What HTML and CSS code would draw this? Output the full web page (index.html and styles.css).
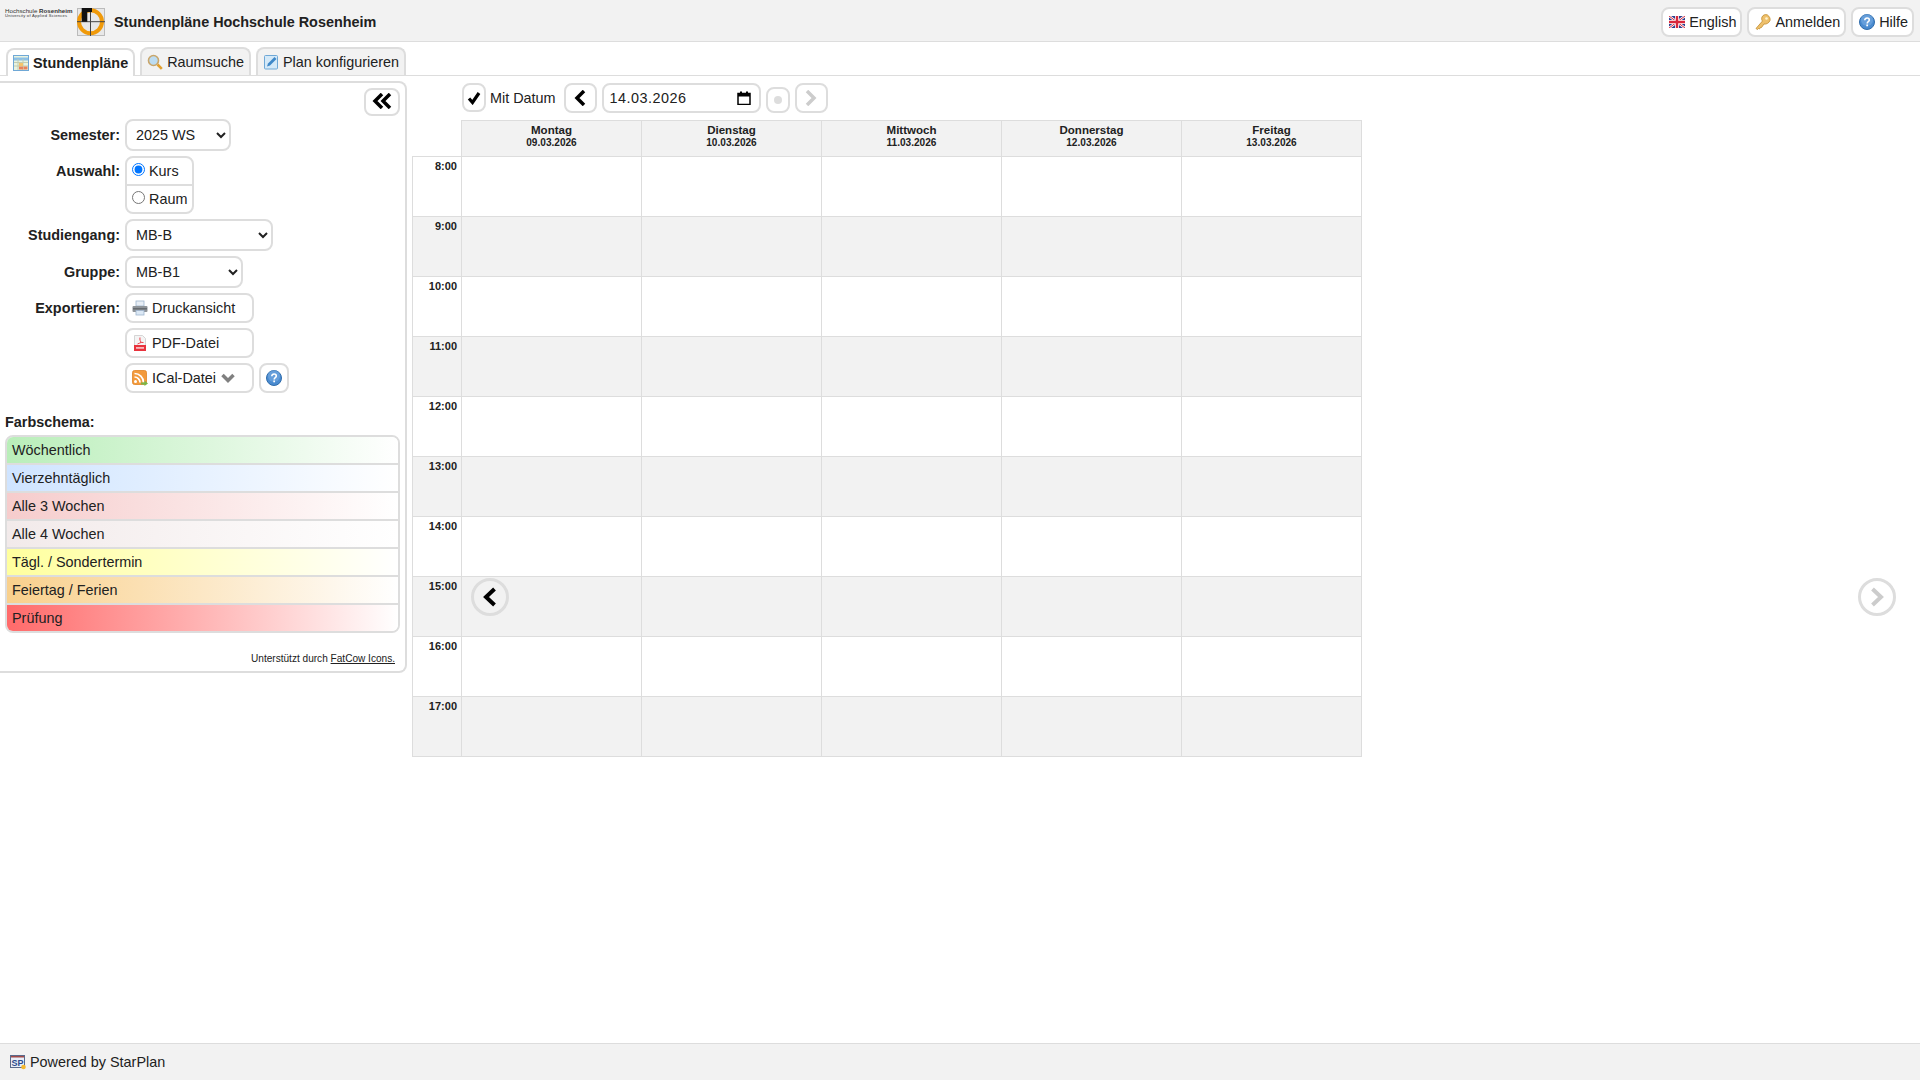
FILE: index.html
```html
<!DOCTYPE html>
<html lang="de">
<head>
  <meta charset="UTF-8">
  <meta name="viewport" content="width=device-width, initial-scale=1.0">
  <title>Stundenpläne Hochschule Rosenheim</title>
  <link rel="stylesheet" href="styles.css">
</head>
<body>
  <svg class="defs" width="0" height="0">
    <symbol id="help" viewBox="0 0 16 16">
      <circle cx="8" cy="8" r="7.5" fill="#4a8bd0" stroke="#2f6cab" stroke-width="1"/>
      <circle cx="8" cy="6" r="6" fill="#7fb2e5" opacity=".5"/>
      <path d="M5.8 6.2c0-1.4 1-2.2 2.3-2.2s2.2.8 2.2 2c0 1.700-2.100 1.700-2.100 3.400" fill="none" stroke="#fff" stroke-width="1.600"/>
      <rect x="7.300" y="10.500" width="1.700" height="1.800" fill="#fff"/>
    </symbol>
  </svg>

  <div class="header">
    <div class="logotext">
      <div class="logoline1">Hochschule <b>Rosenheim</b></div>
      <div class="logoline2">University of Applied Sciences</div>
    </div>
    <svg class="logo" width="28" height="28" viewBox="0 0 28 28">
      <rect x=".5" y=".5" width="27" height="27" fill="#e8e8e8" stroke="#bbb"/>
      <circle cx="13.500" cy="13.700" r="11.500" fill="none" stroke="#f09a0a" stroke-width="4"/>
      <path d="M13.500 0v28M0 13.700h28" stroke="#444" stroke-width="1"/>
      <path d="M4.700 0H15v4H10.300v9.700H4.700z" fill="#111"/>
    </svg>
    <div class="title">Stundenpläne Hochschule Rosenheim</div>
    <div class="headbtns">
      <a class="btn">
        <svg width="16" height="12" viewBox="0 0 16 12"><rect width="16" height="12" fill="#2b3f8f"/><path d="M0 0l16 12M16 0L0 12" stroke="#fff" stroke-width="2.500"/><path d="M0 0l16 12M16 0L0 12" stroke="#d8283c" stroke-width="1"/><path d="M8 0v12M0 6h16" stroke="#fff" stroke-width="4"/><path d="M8 0v12M0 6h16" stroke="#d8283c" stroke-width="2.400"/></svg>
        English
      </a>
      <a class="btn">
        <svg width="16" height="16" viewBox="0 0 16 16"><path d="M1 14.500l1.500 1 1-1 1 .500 1-1.500 1 0 2.500-3.500c2.500.500 5-1 6-3.500.500-2-.500-4-2.500-5.500-2.500-1-4.500 0-5.500 2-.500 1.500-.500 3 .500 4z" fill="#eec06b" stroke="#c08a2c" stroke-width=".8"/><circle cx="11.500" cy="4.500" r="1.300" fill="#fff3d0"/></svg>
        Anmelden
      </a>
      <a class="btn">
        <svg width="16" height="16"><use href="#help"/></svg>
        Hilfe
      </a>
    </div>
  </div>

  <div class="tabs">
    <a class="tab active">
      <svg width="16" height="16" viewBox="0 0 16 16"><rect x=".5" y=".5" width="15" height="15" fill="#e8f3e0" stroke="#6fa8d6"/><path d="M1 4h14" stroke="#8cc0e6" stroke-width="3"/><path d="M1 7.500h14M1 11h14M5 4v11M10 4v11" stroke="#c2ccb0" stroke-width="1"/><rect x="6" y="8" width="4" height="3" fill="#f4c46a"/><rect x="10.500" y="11.500" width="4" height="3" fill="#e8825a"/><rect x="6" y="11.500" width="4" height="3" fill="#e8825a"/></svg>
      Stundenpläne
    </a>
    <a class="tab">
      <svg width="16" height="16" viewBox="0 0 16 16"><circle cx="6.500" cy="6.500" r="5" fill="#bcdcf2" stroke="#c9a66b" stroke-width="1.600"/><path d="M10.500 10.500l4.300 4.300" stroke="#e0a030" stroke-width="2.600"/></svg>
      Raumsuche
    </a>
    <a class="tab">
      <svg width="16" height="16" viewBox="0 0 16 16"><rect x="1.500" y="1.500" width="13" height="13.500" rx="1" fill="#d4e9f8" stroke="#6fa8d6"/><path d="M4 12.500l1-3 6.500-6.500 2 2L7 11.500z" fill="#3f88c8"/></svg>
      Plan konfigurieren
    </a>
  </div>

  <div class="main">
    <div class="sidebar">
      <div class="collapse">
        <button class="iconbtn collapsebtn">
          <svg width="20" height="16" viewBox="0 0 20 16"><path d="M10 1L3 8l7 7M18 1l-7 7 7 7" fill="none" stroke="#000" stroke-width="3.500"/></svg>
        </button>
      </div>

      <div class="form">
        <div class="lbl">Semester:</div>
        <div><select class="sel sel-sem"><option>2025 WS</option></select></div>

        <div class="lbl lbl-auswahl">Auswahl:</div>
        <div class="radios">
          <label class="radio"><input type="radio" name="auswahl" checked>Kurs</label>
          <label class="radio"><input type="radio" name="auswahl">Raum</label>
        </div>

        <div class="lbl">Studiengang:</div>
        <div><select class="sel sel-stud"><option>MB-B</option></select></div>

        <div class="lbl">Gruppe:</div>
        <div><select class="sel sel-grp"><option>MB-B1</option></select></div>

        <div class="lbl lbl-export">Exportieren:</div>
        <div class="export">
          <a class="btn expbtn">
            <svg width="16" height="16" viewBox="0 0 16 16"><rect x="4" y="1" width="8" height="5" fill="#e8eef5" stroke="#9fb4cc" stroke-width=".8"/><rect x=".5" y="6" width="15" height="6" rx="1" fill="#8f9499"/><rect x="1" y="8" width="14" height="1.500" fill="#666b70"/><rect x="4" y="10.500" width="8" height="4.500" fill="#dbe8f5" stroke="#9fb4cc" stroke-width=".8"/></svg>
            Druckansicht
          </a>
        </div>

        <div></div>
        <div class="export">
          <a class="btn expbtn">
            <svg width="16" height="16" viewBox="0 0 16 16"><path d="M2.500.500h8l3 3v12h-11z" fill="#f4f4f4" stroke="#ccc" stroke-width=".8"/><path d="M8 2.500c-.500 2 .500 4 1 5-1 .500-2.500 1-3.500 1.500M8.500 7c1 .500 2 .500 3 .500" fill="none" stroke="#e8323c" stroke-width=".9"/><rect x="2" y="10" width="12" height="6" fill="#e8323c"/><rect x="4" y="12" width="8" height="1.800" fill="#f7b9bc"/></svg>
            PDF-Datei
          </a>
        </div>

        <div></div>
        <div class="export">
          <a class="btn expbtn">
            <svg width="16" height="16" viewBox="0 0 16 16"><rect x=".5" y=".5" width="14" height="14" rx="2" fill="#f39a3c" stroke="#e08426" stroke-width=".8"/><circle cx="3.500" cy="11.500" r="1.500" fill="#fff"/><path d="M2.500 7a5.500 5.500 0 0 1 5.500 5.500M2.500 3.500a9 9 0 0 1 9 9" fill="none" stroke="#fff" stroke-width="1.700"/><path d="M9 12.500h3.500V10.500l3.500 3-3.500 2.500v-1.500H9z" fill="#7ab648"/></svg>
            ICal-Datei
            <svg class="chev" width="14" height="10" viewBox="0 0 14 10"><path d="M1.500 2L7 7.500 12.500 2" fill="none" stroke="#808080" stroke-width="3.500"/></svg>
          </a>
          <button class="iconbtn helpbtn"><svg width="16" height="16"><use href="#help"/></svg></button>
        </div>
      </div>

      <div class="legendtitle">Farbschema:</div>
      <div class="legend">
        <div class="lg lg1">Wöchentlich</div>
        <div class="lg lg2">Vierzehntäglich</div>
        <div class="lg lg3">Alle 3 Wochen</div>
        <div class="lg lg4">Alle 4 Wochen</div>
        <div class="lg lg5">Tägl. / Sondertermin</div>
        <div class="lg lg6">Feiertag / Ferien</div>
        <div class="lg lg7">Prüfung</div>
      </div>
      <div class="credit">Unterstützt durch <a href="#">FatCow Icons.</a></div>
    </div>

    <div class="content">
      <div class="toolbar">
        <label class="iconbtn check">
          <svg width="14" height="14" viewBox="0 0 14 14"><path d="M2 7.500l3.500 4L12 2" fill="none" stroke="#000" stroke-width="3.200"/></svg>
        </label>
        <span class="mitdatum">Mit Datum</span>
        <button class="iconbtn navbtn">
          <svg width="14" height="16" viewBox="0 0 14 16"><path d="M11 1L4 8l7 7" fill="none" stroke="#000" stroke-width="3.500"/></svg>
        </button>
        <div class="dateinput">
          <span class="datetext">14.03.2026</span>
          <svg width="14" height="14" viewBox="0 0 14 14"><path d="M1 2.500h12v11H1z" fill="none" stroke="#000" stroke-width="1.500"/><path d="M1 2h12v3.500H1zM3 .5h2v2H3zM9 .5h2v2H9z" fill="#000"/></svg>
        </div>
        <button class="iconbtn todaybtn"><span class="dot"></span></button>
        <button class="iconbtn navbtn">
          <svg width="14" height="16" viewBox="0 0 14 16"><path d="M3 1l7 7-7 7" fill="none" stroke="#ccc" stroke-width="3.500"/></svg>
        </button>
      </div>

      <table class="plan">
        <tr class="dayhead">
          <th class="corner"></th>
          <th>Montag<span>09.03.2026</span></th>
          <th>Dienstag<span>10.03.2026</span></th>
          <th>Mittwoch<span>11.03.2026</span></th>
          <th>Donnerstag<span>12.03.2026</span></th>
          <th>Freitag<span>13.03.2026</span></th>
        </tr>
        <tr><td class="time">8:00</td><td></td><td></td><td></td><td></td><td></td></tr>
        <tr><td class="time">9:00</td><td></td><td></td><td></td><td></td><td></td></tr>
        <tr><td class="time">10:00</td><td></td><td></td><td></td><td></td><td></td></tr>
        <tr><td class="time">11:00</td><td></td><td></td><td></td><td></td><td></td></tr>
        <tr><td class="time">12:00</td><td></td><td></td><td></td><td></td><td></td></tr>
        <tr><td class="time">13:00</td><td></td><td></td><td></td><td></td><td></td></tr>
        <tr><td class="time">14:00</td><td></td><td></td><td></td><td></td><td></td></tr>
        <tr><td class="time">15:00</td><td></td><td></td><td></td><td></td><td></td></tr>
        <tr><td class="time">16:00</td><td></td><td></td><td></td><td></td><td></td></tr>
        <tr><td class="time">17:00</td><td></td><td></td><td></td><td></td><td></td></tr>
      </table>
    </div>

    <button class="circle circle-prev">
      <svg width="16" height="20" viewBox="0 0 16 20"><path d="M12.500 2L4 10l8.500 8" fill="none" stroke="#000" stroke-width="4"/></svg>
    </button>
    <button class="circle circle-next">
      <svg width="16" height="20" viewBox="0 0 16 20"><path d="M3.500 2L12 10l-8.500 8" fill="none" stroke="#ccc" stroke-width="4"/></svg>
    </button>
  </div>

  <div class="footer">
    <svg width="16" height="16" viewBox="0 0 16 16"><rect x=".5" y="1.500" width="14" height="12" fill="#e8eef8" stroke="#5a6a8c"/><rect x="1" y="2" width="13" height="1.500" fill="#a04a4a"/><text x="1.500" y="12" font-family="Liberation Sans" font-size="9" font-weight="bold" fill="#2c4a8c">SP</text><circle cx="13.500" cy="13" r="2.300" fill="#f5b82e"/></svg>
    Powered by StarPlan
  </div>
</body>
</html>
```

FILE: styles.css
```css
* { box-sizing: border-box; }

html, body { height: 100%; }

body {
  margin: 0;
  display: flex;
  flex-direction: column;
  font-family: "Liberation Sans", Arial, sans-serif;
  font-size: 14.4px;
  color: #212121;
  background: #fff;
}

svg { flex: none; }
.defs { position: absolute; }

/* header */
.header {
  display: flex;
  align-items: flex-start;
  height: 42px;
  padding: 0 6px 0 5px;
  background: #f2f2f2;
  border-bottom: 1px solid #ddd;
}

.logotext {
  width: 72px;
  margin-top: 8px;
  color: #333;
  white-space: nowrap;
}
.logoline1 { font-size: 6.2px; line-height: 6px; }
.logoline2 { font-size: 4.1px; line-height: 4px; letter-spacing: .25px; }

.logo { margin: 8px 9px 0 0; }

.title { margin-top: 13px; font-weight: bold; line-height: 18px; }

.headbtns { display: flex; gap: 5px; margin: 7px 0 0 auto; }

.btn {
  display: flex;
  align-items: center;
  gap: 4px;
  height: 30px;
  padding: 0 4px 0 6px;
  background: #fff;
  border: 2px solid #ddd;
  border-radius: 8px;
  white-space: nowrap;
}

/* tabs */
.tabs {
  display: flex;
  gap: 5px;
  height: 34px;
  padding: 5px 0 0 6px;
  border-bottom: 1px solid #ddd;
}

.tab {
  display: flex;
  align-items: center;
  gap: 4px;
  height: 28px;
  padding: 0 5px;
  background: #f2f2f2;
  border: 2px solid #ddd;
  border-bottom: 0;
  border-radius: 8px 8px 0 0;
}

.tab.active {
  margin-top: 1px;
  background: #fff;
  font-weight: bold;
}

/* main area */
.main {
  flex: 1;
  display: flex;
  align-items: flex-start;
  position: relative;
  padding-top: 5px;
}

.sidebar {
  width: 407px;
  height: 592px;
  padding: 5px 5px 0 5px;
  border: 2px solid #ddd;
  border-left: 0;
  border-radius: 0 8px 8px 0;
}

.collapse { display: flex; justify-content: flex-end; }

.iconbtn {
  display: flex;
  align-items: center;
  justify-content: center;
  padding: 0;
  background: #fff;
  border: 2px solid #ddd;
  border-radius: 8px;
}

.collapsebtn { width: 36px; height: 28px; padding-bottom: 2px; }

.form {
  display: grid;
  grid-template-columns: 115px auto;
  column-gap: 5px;
  row-gap: 5px;
  margin-top: 3px;
  justify-items: start;
}

.lbl {
  justify-self: end;
  align-self: start;
  font-weight: bold;
  line-height: 32px;
}
.lbl-auswahl { line-height: 30px; }
.lbl-export { line-height: 30px; }

.sel {
  display: block;
  height: 32px;
  padding: 0 0 0 5px;
  font: inherit;
  color: #212121;
  background: #fff;
  border: 2px solid #ddd;
  border-radius: 8px;
}
.sel-sem { width: 106px; }
.sel-stud { width: 148px; }
.sel-grp { width: 118px; }

.radios {
  border: 2px solid #ddd;
  border-radius: 8px;
  width: 69px;
  height: 58px;
}

.radio {
  display: flex;
  align-items: center;
  height: 26px;
  padding-left: 5px;
  white-space: nowrap;
}
.radio + .radio { border-top: 2px solid #ddd; height: 28px; }
.radio input { margin: 0 4px 4px 0; }

.export { display: flex; gap: 5px; }
.expbtn { width: 129px; padding-left: 5px; }
.chev { margin-left: 1px; }
.helpbtn { width: 30px; height: 30px; }

.legendtitle {
  margin-top: 21px;
  font-weight: bold;
  line-height: 16px;
}

.legend {
  width: 395px;
  margin-top: 5px;
  border: 2px solid #ddd;
  border-radius: 8px;
  overflow: hidden;
}

.lg {
  height: 28px;
  padding-left: 5px;
  line-height: 26px;
  border-top: 2px solid #ddd;
}
.lg:first-child { height: 26px; border-top: 0; }
.lg1 { background: linear-gradient(to right, #b9eeb9, #fff); }
.lg2 { background: linear-gradient(to right, #cfe4ff, #fff); }
.lg3 { background: linear-gradient(to right, #f6cccc, #fff); }
.lg4 { background: linear-gradient(to right, #f2eaea, #fff); }
.lg5 { background: linear-gradient(to right, #ffff9e, #fff); }
.lg6 { background: linear-gradient(to right, #f9d08c, #fff); }
.lg7 { background: linear-gradient(to right, #ff6a6a, #fff); }

.credit {
  margin-top: 20px;
  padding-right: 5px;
  text-align: right;
  font-size: 10.08px;
  line-height: 12px;
}
.credit a { color: #212121; }

/* plan */
.content { margin-left: 5px; }

.toolbar {
  display: flex;
  align-items: flex-start;
  height: 34px;
  margin-top: 2px;
  padding-left: 50px;
}

.check { width: 24px; height: 29px; }
.mitdatum { margin: 0 8px 0 4px; line-height: 30px; }
.navbtn { width: 33px; height: 30px; }

.dateinput {
  display: flex;
  align-items: center;
  justify-content: space-between;
  width: 159px;
  height: 30px;
  margin: 0 5px;
  padding: 0 8px 0 6px;
  background: #fff;
  border: 2px solid #ddd;
  border-radius: 8px;
}
.datetext { letter-spacing: .5px; }

.todaybtn { width: 24px; height: 26px; margin: 4px 5px 0 0; }
.dot { width: 8px; height: 8px; border-radius: 50%; background: #ddd; }

.plan {
  border-collapse: collapse;
  table-layout: fixed;
  width: 949px;
  margin-top: 3px;
}

.plan th, .plan td {
  width: 180px;
  border: 1px solid #ddd;
  padding: 0;
}

.plan th.corner {
  width: 49px;
  border: 0;
  border-right: 1px solid #ddd;
  border-bottom: 1px solid #ddd;
  background: #fff;
}

.dayhead th {
  padding-top: 3px;
  background: #f2f2f2;
  font-size: 11.52px;
  line-height: 12px;
  vertical-align: top;
  color: #212121;
}
.dayhead span { display: block; margin-top: 1px; font-size: 10.08px; }

.plan tr { height: 60px; }
.plan tr.dayhead { height: 36px; }
.plan tr:nth-child(odd) td { background: #f2f2f2; }

.plan td.time {
  width: 49px;
  padding: 3px 4px 0 0;
  vertical-align: top;
  text-align: right;
  font-size: 11px;
  font-weight: bold;
  line-height: 12px;
}

.circle {
  position: absolute;
  top: 502px;
  display: flex;
  align-items: center;
  justify-content: center;
  width: 38px;
  height: 38px;
  padding: 0;
  background: transparent;
  border: 3px solid #ddd;
  border-radius: 50%;
}
.circle-prev { left: 471px; }
.circle-next { left: 1858px; }

/* footer */
.footer {
  display: flex;
  align-items: center;
  gap: 4px;
  height: 37px;
  padding-left: 10px;
  background: #f2f2f2;
  border-top: 1px solid #ddd;
}
```
